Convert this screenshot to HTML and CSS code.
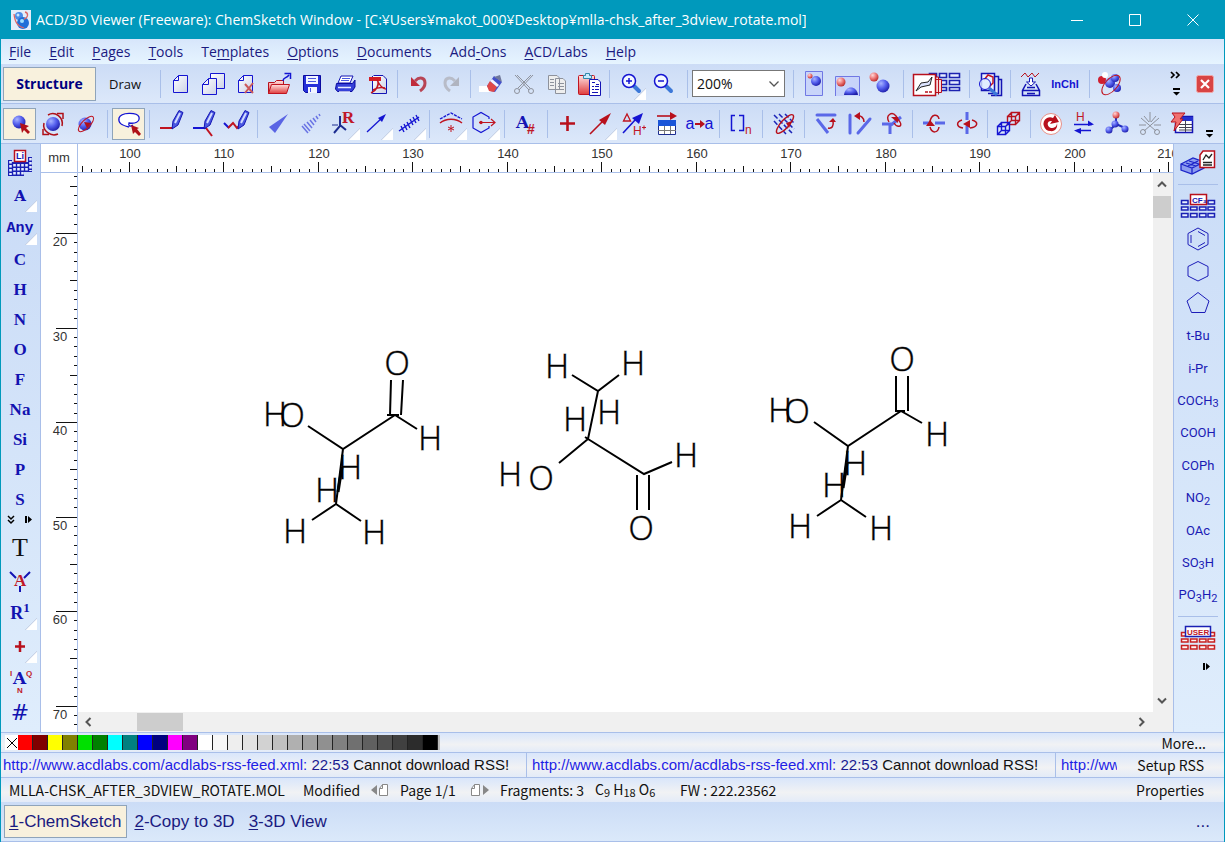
FILE: index.html
```html
<!DOCTYPE html>
<html lang="en">
<head>
<meta charset="utf-8">
<title>ACD/3D Viewer (Freeware): ChemSketch Window</title>
<link rel="stylesheet" href="styles.css">
</head>
<body>
<svg class="defs" aria-hidden="true">
  <defs>
    <radialGradient id="blue" cx="35%" cy="30%" r="75%"><stop offset="0" stop-color="#a8b4ff"/><stop offset=".5" stop-color="#5560ee"/><stop offset="1" stop-color="#1c1ca8"/></radialGradient>
    <radialGradient id="red" cx="35%" cy="30%" r="75%"><stop offset="0" stop-color="#ffd8d8"/><stop offset=".5" stop-color="#ee7a7a"/><stop offset="1" stop-color="#b82828"/></radialGradient>
    <linearGradient id="page" x2="1" y2="1"><stop offset="0" stop-color="#fff"/><stop offset="1" stop-color="#ccd2e6"/></linearGradient>
    <linearGradient id="folder" y2="1" x2="0"><stop offset="0" stop-color="#ffe0e0"/><stop offset="1" stop-color="#e03c3c"/></linearGradient>
    <pattern id="hticks" x="51" y="0" width="189" height="28" patternUnits="userSpaceOnUse">
      <path transform="translate(.5 0)" d="M0 18V28M94 18V28M47 22V28M142 22V28M9 25V28M19 25V28M28 25V28M38 25V28M57 25V28M66 25V28M76 25V28M85 25V28M104 25V28M113 25V28M123 25V28M132 25V28M151 25V28M161 25V28M170 25V28M180 25V28" stroke="#111"/>
    </pattern>
    <pattern id="vticks" x="0" y="60" width="36" height="189" patternUnits="userSpaceOnUse">
      <path transform="translate(0 .5)" d="M15 0H36M15 95H36M29 47H36M29 142H36M33 9H36M33 19H36M33 28H36M33 38H36M33 57H36M33 66H36M33 76H36M33 85H36M33 104H36M33 113H36M33 123H36M33 132H36M33 151H36M33 161H36M33 170H36M33 180H36" stroke="#111"/>
    </pattern>
    <symbol id="pencil" viewBox="0 0 14 20"><path d="M9 .5 13 2.500 8 15 2 19 3 11Z" fill="#4a58e0" stroke="#1414b4"/><path d="M10 3 5 13" stroke="#d4dcff" stroke-width="2"/></symbol>
  </defs>
</svg>

<header class="titlebar">
  <svg class="app-icon" viewBox="0 0 20 20"><rect width="20" height="20" fill="#e4edfa"/><circle cx="8" cy="6" r="4" fill="#4a8ce8"/><circle cx="12" cy="13" r="6" fill="#1f6fd8"/><circle cx="11" cy="11" r="2" fill="#9fe0ff"/><circle cx="7" cy="5" r="1.500" fill="#c8e8ff"/><path d="M3 4C4 12 6 16 13 18M14 2C18 3 17 8 13 9" fill="none" stroke="#d66" stroke-width="1.300"/></svg>
  <h1>ACD/3D Viewer (Freeware): ChemSketch Window - [C:¥Users¥makot_000¥Desktop¥mlla-chsk_after_3dview_rotate.mol]</h1>
  <div class="window-buttons">
    <button aria-label="Minimize"><svg viewBox="0 0 14 14"><path d="M1 7.500H13"/></svg></button>
    <button aria-label="Maximize"><svg viewBox="0 0 14 14"><path d="M1.500 1.500H12.500V12.500H1.500Z"/></svg></button>
    <button aria-label="Close"><svg viewBox="0 0 14 14"><path d="M1.500 1.500 12.500 12.500M12.500 1.500 1.500 12.500"/></svg></button>
  </div>
</header>

<nav class="menubar">
  <button><u>F</u>ile</button><button><u>E</u>dit</button><button><u>P</u>ages</button><button><u>T</u>ools</button><button>Te<u>m</u>plates</button><button><u>O</u>ptions</button><button><u>D</u>ocuments</button><button>Add<u>-</u>Ons</button><button><u>A</u>CD/Labs</button><button><u>H</u>elp</button>
</nav>

<div class="toolbar toolbar-main" role="toolbar" aria-label="General">
  <div class="modes"><button class="mode active">Structure</button><button class="mode">Draw</button></div>
  <div class="group">
    <button aria-label="New"><svg viewBox="0 0 32 32"><path d="M14.500 7.500H23.500V24.500H9.500V12.500ZM14.500 7.500V12.500H9.500" fill="url(#page)" stroke="#1414d2"/></svg></button>
    <button aria-label="New page"><svg viewBox="0 0 32 32"><path d="M13.500 5.500H27.500V20.500H13.500Z" fill="url(#page)" stroke="#1414d2"/><path d="M11.500 10.500H19.500V26.500H5.500V16.500ZM11.500 10.500V16.500H5.500" fill="url(#page)" stroke="#1414d2"/></svg></button>
    <button aria-label="Delete page"><svg viewBox="0 0 32 32"><path d="M13.500 7.500H22.500V24.500H8.500V12.500ZM13.500 7.500V12.500H8.500" fill="url(#page)" stroke="#1414d2"/><path d="M15 16 23 25M23 15 15 25" stroke="#cc5a5a" stroke-width="2"/></svg></button>
    <button aria-label="Open"><svg viewBox="0 0 32 32"><path d="M5.500 14.500H11.500L13.500 12.500H20.500V16.500H24.500L22.500 25.500H5.500Z" fill="url(#folder)" stroke="#b8101c"/><path d="M5.500 25.500 8.500 16.500H26.500L23.500 25.500Z" fill="url(#folder)" stroke="#c01420"/><path d="M20 13C20 9 23 11 26 7M21.500 5.500H27.500V11" fill="none" stroke="#1414d2" stroke-width="1.500"/></svg></button>
    <button aria-label="Save"><svg viewBox="0 0 32 32"><path d="M7.500 7.500H24.500V24.500H9.500L7.500 22.500Z" fill="#2530d8" stroke="#0a0aa0"/><path d="M10 8H22V16H10ZM12 19H21V25H12Z" fill="#f2f5ff"/><path d="M12 10.500H20M12 13.500H20M14.500 20V24" stroke="#4a58e0"/></svg></button>
    <button aria-label="Print"><svg viewBox="0 0 32 32"><path d="M12 8H24L21 15H9Z" fill="#fff" stroke="#1414b4"/><path d="M13 10.500H21M12 12.500H20" stroke="#4a58e0"/><path d="M7.500 15.500H23.500L26 12V19L23 23.500H8.500L6.500 21Z" fill="#3540d8" stroke="#0a0aa0"/><path d="M9 19.500H22M10 24H21" stroke="#e8ecff" stroke-width="1.500"/></svg></button>
    <button aria-label="Export to PDF"><svg viewBox="0 0 32 32"><path d="M11.500 7.500H21L24.500 11V25.500H10.500V8" fill="url(#page)" stroke="#1414b4"/><path d="M7 9H19V13H7Z" fill="#d41c24"/><path d="M15 12C19 20 22 21 24 21M16 13C17 19 13 23 9 25M11 22C16 19 20 19 23 20" fill="none" stroke="#c01420" stroke-width="1.500"/></svg></button>
  </div>
  <div class="group">
    <button aria-label="Undo"><svg viewBox="0 0 32 32"><path d="M13 13C18 8 23 10 23 15C23 19 21 21 18 23" fill="none" stroke="#b84454" stroke-width="3"/><path d="M9 9V18H18Z" fill="#c02c3c"/></svg></button>
    <button aria-label="Redo" disabled><svg viewBox="0 0 32 32"><path d="M20 13C15 8 10 10 10 15C10 19 12 21 15 23" fill="none" stroke="#b8bcc8" stroke-width="3"/><path d="M24 9V18H15Z" fill="#b0b4c0"/></svg></button>
  </div>
  <div class="group">
    <button aria-label="Clean"><svg viewBox="0 0 32 32"><path d="M4 18H18V24H4Z" fill="#fff"/><path d="M12 18 19 8 27 14 20 24 15 23Z" fill="#4450c8"/><path d="M12 18 15 13 22 19 19 24 14 23Z" fill="#e04848"/><path d="M15 13 17 11 24 17 22 19Z" fill="#f4f4ff"/><path d="M19 9 25 7 27 14Z" fill="#70789c"/></svg></button>
    <button aria-label="Cut" disabled><svg viewBox="0 0 32 32" fill="none" stroke="#8e929c"><path d="M7 7 21 22M25 7 11 22M9 7 22 20M23 7 10 20"/><circle cx="9" cy="23" r="2.500"/><circle cx="23" cy="23" r="2.500"/></svg></button>
    <button aria-label="Copy" disabled><svg viewBox="0 0 32 32"><path d="M7.500 7.500H16L18.500 10V21.500H7.500ZM14.500 10.500H22L24.500 13V25.500H14.500Z" fill="#eee" stroke="#8e929c"/><path d="M9 11.500H13M9 14.500H13M9 17.500H13M17 15.500H23M17 18.500H23M17 21.500H23" stroke="#8e929c"/></svg></button>
    <button aria-label="Paste"><svg viewBox="0 0 32 32"><rect x="4.500" y="7.500" width="16" height="19" rx="1" fill="url(#folder)" stroke="#c01420"/><path d="M9.500 10.500V7.500H11.500V5.500H15.500V7.500H17.500V10.500Z" fill="#c8ecff" stroke="#38a"/><path d="M15.500 11.500H24L26.500 14V27.500H15.500Z" fill="#fff" stroke="#1414b4"/><path d="M18 14.500H21M22 16.500H25M18 18.500H20M21 18.500H25M18 21.500H20M21 21.500H25M18 24.500H24" stroke="#1414b4"/></svg></button>
  </div>
  <div class="group start">
    <button class="more" aria-label="Zoom in"><svg viewBox="0 0 32 32" fill="none"><path d="M20 18 25 23" stroke="#3c78d8" stroke-width="4" stroke-linecap="round"/><circle cx="15" cy="13" r="6.500" fill="#f4f8ff" stroke="#1414d2" stroke-width="1.500"/><path d="M12 13H18M15 10V16" stroke="#1414d2" stroke-width="1.500"/></svg></button>
    <button aria-label="Zoom out"><svg viewBox="0 0 32 32" fill="none"><path d="M19 18 24 23" stroke="#3c78d8" stroke-width="4" stroke-linecap="round"/><circle cx="14" cy="13" r="6.500" fill="#f4f8ff" stroke="#1414d2" stroke-width="1.500"/><path d="M11 13H17" stroke="#1414d2" stroke-width="1.500"/></svg></button>
  </div>
  <div class="group start">
    <div class="zoom"><select aria-label="Zoom level"><option>200%</option></select><svg viewBox="0 0 10 6"><path d="M.5 .5 5 5 9.500 .5" fill="none" stroke="#555" stroke-width="1.300"/></svg></div>
  </div>
  <div class="group start">
    <button aria-label="Full page"><svg viewBox="0 0 32 32"><path d="M7.500 3.500H24.500V27.500H7.500Z" fill="#c8d4fa" stroke="#7078e4"/><circle cx="12" cy="8" r="2.500" fill="url(#red)"/><circle cx="18" cy="13" r="5" fill="url(#blue)"/></svg></button>
    <button aria-label="Page width"><svg viewBox="0 0 32 32"><path d="M4.500 28V8.500H28.500V28" fill="#c8d4fa" stroke="#7078e4"/><circle cx="10" cy="14" r="4.500" fill="url(#red)"/><path d="M13 27C14 17 26 17 27 27Z" fill="url(#blue)"/></svg></button>
    <button aria-label="Fit all"><svg viewBox="0 0 32 32"><circle cx="10" cy="9" r="4.500" fill="url(#red)"/><circle cx="19" cy="18" r="6.500" fill="url(#blue)"/></svg></button>
  </div>
  <div class="group">
    <button class="wide" aria-label="Template window"><svg viewBox="0 0 50 32"><path d="M17.500 5.500H24.500V9.500H17.500ZM27.500 5.500H34.500V9.500H27.500ZM37.500 5.500H47.500V9.500H37.500ZM27.500 12.500H34.500V16.500H27.500ZM37.500 12.500H47.500V16.500H37.500ZM27.500 19.500H34.500V22.500H27.500ZM37.500 19.500H47.500V22.500H37.500Z" fill="#e4ebff" stroke="#1c22b0" stroke-width="1.600"/><path d="M23 11.500H29.500V24.500H23M23 9H26.500V26.500" fill="#f4d8dc" stroke="#b8101c"/><path d="M1.500 6.500H23.500V27.500H1.500Z" fill="#fff" stroke="#b8101c" stroke-width="1.500"/><path d="M4 23 9 15 16 14 20 9 18 17 9 19Z" fill="#dce4ff" stroke="#222"/><path d="M13 24H21" stroke="#b8101c" stroke-width="1.500" stroke-dasharray="3 1"/></svg></button>
  </div>
  <div class="group">
    <button aria-label="Search"><svg viewBox="0 0 32 32"><path d="M7.500 5.500H20.500V22.500H7.500Z" fill="#eef2ff" stroke="#1414b4" stroke-width="1.500"/><path d="M21 8.500H24.500V25.500H14M25 11.500H27.500V27.500H17" fill="none" stroke="#1414b4" stroke-width="1.500"/><path d="M10 12 14 7 19 9 19 15 15 19" fill="none" stroke="#c01420" stroke-width="1.500"/><path d="M15 20 23 27" stroke="#3c78d8" stroke-width="3"/><circle cx="11" cy="16" r="5.500" fill="#dcecff" fill-opacity=".8" stroke="#1414d2"/></svg></button>
  </div>
  <div class="group start">
    <button aria-label="Generate name"><svg viewBox="0 0 32 32"><path d="M6 9 10 5 13 9 17 5 20 9 24 5" fill="none" stroke="#b8101c"/><path d="M14.500 10V14H11.500L16 18 20.500 14H17.500V10Z" fill="#fff" stroke="#1414b4"/><path d="M11 16 7.500 22.500V27.500H24.500V22.500L21 16M8 22.500H24M12 25.500H20M12 19.500H20" fill="none" stroke="#1414b4" stroke-width="1.500"/></svg></button>
    <button class="inchi">InChI</button>
  </div>
  <div class="group start last">
    <button aria-label="3D optimization"><svg viewBox="0 0 32 32"><circle cx="8" cy="12" r="4" fill="#d02030"/><circle cx="11" cy="7" r="3" fill="#fff"/><circle cx="16" cy="15" r="5" fill="url(#blue)"/><circle cx="21" cy="10" r="4" fill="url(#blue)"/><circle cx="23" cy="20" r="4" fill="url(#blue)"/><ellipse cx="17" cy="17" rx="6" ry="12" transform="rotate(42 17 17)" fill="none" stroke="#c01420"/></svg></button>
    <button class="overflow" aria-label="More buttons"><svg viewBox="0 0 14 32"><path d="M2 4 5 7 2 10M7 4 10 7 7 10" fill="none" stroke="#000" stroke-width="1.700"/><path d="M4 20H11V22H4ZM4 24H11L7.500 27.500Z"/></svg></button>
    <button class="close-doc" aria-label="Close document"><svg viewBox="0 0 18 18"><rect x=".5" y=".5" width="17" height="17" rx="2" fill="#d84444" stroke="#f0a8a8"/><path d="M5 5 13 13M13 5 5 13" stroke="#fff" stroke-width="2.200"/></svg></button>
  </div>
</div>

<div class="toolbar toolbar-structure" role="toolbar" aria-label="Structure">
  <div class="group start first">
    <button class="active" aria-label="Select and move"><svg viewBox="0 0 32 32"><circle cx="15" cy="14" r="6.500" fill="url(#blue)"/><path d="M16 15 25 18 22 20 26 24 24 26 20 22 18 25Z" fill="#b01018"/></svg></button>
    <button aria-label="Select and rotate"><svg viewBox="0 0 32 32"><circle cx="16" cy="16" r="7" fill="url(#blue)"/><path d="M11 7C18 3 27 9 25 18M21 26C14 29 5 23 7 15" fill="none" stroke="#b01018" stroke-width="1.500"/><path d="M20 5.500H26V11M12 26.500H6V21" fill="none" stroke="#b01018" stroke-width="1.500"/></svg></button>
    <button aria-label="3D rotation"><svg viewBox="0 0 32 32"><circle cx="15" cy="16" r="6.500" fill="url(#blue)"/><ellipse cx="16" cy="16" rx="10" ry="4" transform="rotate(-45 16 16)" fill="none" stroke="#c01420"/><path d="M14 14 21 15 17 20Z" fill="#b01018"/></svg></button>
  </div>
  <div class="group">
    <button class="active" aria-label="Lasso"><svg viewBox="0 0 32 32"><path d="M16 19C8 17 5 15 6 10C8 4 24 4 26 9C27 14 22 16 16 15C15 18 17 19 20 17" fill="#fff" stroke="#1414d2" stroke-width="1.300"/><path d="M18 17 26 20 24 21 28 26 26 28 22 24 20 26Z" fill="#b01018"/></svg></button>
  </div>
  <div class="group">
    <button aria-label="Draw normal"><svg viewBox="0 0 32 32"><path d="M5 20H18" stroke="#c01420" stroke-width="2"/><use href="#pencil" x="15" y="2" width="14" height="20"/></svg></button>
    <button aria-label="Draw continuous"><svg viewBox="0 0 32 32"><path d="M5 20H18" stroke="#1414d2" stroke-width="2"/><path d="M18 20 24 28" stroke="#c01420" stroke-width="2"/><use href="#pencil" x="14" y="2" width="14" height="20"/></svg></button>
    <button aria-label="Draw chains"><svg viewBox="0 0 32 32"><path d="M3 15 8 20" stroke="#1414d2" stroke-width="2"/><path d="M7 20 12 15 16 20 19 17" fill="none" stroke="#c01420" stroke-width="2"/><use href="#pencil" x="15" y="2" width="14" height="20"/></svg></button>
  </div>
  <div class="group">
    <button aria-label="Up stereo bond"><svg viewBox="0 0 32 32"><path d="M26 6 7 19 13 25Z" fill="#5a64e4"/></svg></button>
    <button aria-label="Down stereo bond"><svg viewBox="0 0 32 32"><path d="M7 18 13 25M9 16 15 23M12 14 17 20M15 12 19 17M18 10 21 14M21 8 23 11M24 6 25 8" stroke="#6a74e4" stroke-width="1.500"/></svg></button>
    <button class="more" aria-label="R group"><svg viewBox="0 0 32 32"><path d="M12 8V18L6 25M12 17 18 22" fill="none" stroke="#1c2c90" stroke-width="2"/><path d="M4 17H10" stroke="#1c2c90"/><text x="14" y="15" class="glyph-serif thin red">R</text></svg></button>
    <button class="more" aria-label="Coordinating bond"><svg viewBox="0 0 32 32"><path d="M6 24 22 9" stroke="#1414d2" stroke-width="1.300"/><path d="M25 6 17 10 21 14Z" fill="#1414d2"/></svg></button>
    <button class="more" aria-label="Undefined bond"><svg viewBox="0 0 32 32"><path d="M5 23 25 9M7 18 10 24M10 16 13 22M13 14 16 20M16 11 19 17M19 9 22 15M22 7 25 13" fill="none" stroke="#1414d2" stroke-width="1.400"/></svg></button>
  </div>
  <div class="group">
    <button class="more" aria-label="Delocalized bond"><svg viewBox="0 0 32 32"><path d="M5 11 16 5 27 11" fill="none" stroke="#1414d2" stroke-width="1.300" stroke-dasharray="3 1"/><path d="M5 15C11 10 21 10 27 15" fill="none" stroke="#c01420" stroke-width="1.500"/><path d="M16 17V24M13 19 19 22M19 19 13 22" stroke="#c01420"/></svg></button>
    <button class="more" aria-label="Markush bond"><svg viewBox="0 0 32 32"><path d="M21 11V9L13 4.500 5 9V20L13 24.500 21 20V18" fill="none" stroke="#1414d2" stroke-width="1.200"/><path d="M11 14.500H27M23 11 27 14.500 23 18" fill="none" stroke="#c01420" stroke-width="1.200"/><circle cx="13" cy="14.500" r="1.700" fill="#c01420"/></svg></button>
  </div>
  <div class="group">
    <button aria-label="Edit atom label"><svg viewBox="0 0 32 32"><text x="6" y="20" class="glyph-serif">A</text><text x="17" y="26" class="glyph red">#</text></svg></button>
  </div>
  <div class="group">
    <button aria-label="Plus"><svg viewBox="0 0 32 32"><path d="M8 15.500H23M15.500 8V23" stroke="#b8101c" stroke-width="2.600"/></svg></button>
    <button class="more" aria-label="Reaction arrow"><svg viewBox="0 0 32 32"><path d="M5 26 20 11" stroke="#b8101c" stroke-width="1.600"/><path d="M26 5 14 12 20 17Z" fill="#b8101c"/></svg></button>
    <button aria-label="Reaction conditions"><svg viewBox="0 0 32 32"><path d="M5 25 18 11" stroke="#1414d2" stroke-width="1.600"/><path d="M25 5 14 10 21 16Z" fill="#1414d2"/><path d="M5.500 13 9 6 12.500 13Z" fill="none" stroke="#c01420" stroke-width="1.300"/><text x="15" y="27" class="glyph small red">H</text><path d="M24 19.500H28M26 17.500V21.500" stroke="#c01420"/></svg></button>
    <button aria-label="Calculate"><svg viewBox="0 0 32 32"><path d="M6 8H22" stroke="#b8101c" stroke-width="1.600"/><path d="M19 4 26 8 19 12Z" fill="#b8101c"/><path d="M7.500 12.500H24.500V26.500H7.500Z" fill="#fff" stroke="#1c2c90"/><path d="M7 12H25V18H7Z" fill="#1a55d8"/><path d="M7 22.500H25M13.500 18V26M19.500 18V26" stroke="#777"/></svg></button>
    <button aria-label="Atom to atom map" class="map-label">a<svg viewBox="0 0 10 10"><path d="M0 5H6" stroke="#b8101c" stroke-width="2"/><path d="M5 1 10 5 5 9Z" fill="#b8101c"/></svg>a</button>
  </div>
  <div class="group">
    <button aria-label="Polymer"><svg viewBox="0 0 32 32"><path d="M10 7.500H6.500V22.500H10M14 7.500H18.500V22.500H14" fill="none" stroke="#1414d2" stroke-width="1.500"/><text x="20" y="26" class="glyph small red">n</text></svg></button>
  </div>
  <div class="group">
    <button aria-label="Clean structure"><svg viewBox="0 0 32 32"><path d="M6 7 24 25M6 13 18 26M11 6 26 21M17 6 26 15" stroke="#1c24b8" stroke-width="1.500" stroke-dasharray="5 2"/><ellipse cx="17" cy="16" rx="12" ry="4" transform="rotate(-48 17 16)" fill="none" stroke="#b8101c" stroke-width="1.400"/><path d="M18 15 24 13 21 20Z" fill="#b8101c"/></svg></button>
  </div>
  <div class="group">
    <button aria-label="Set bond horizontally"><svg viewBox="0 0 32 32"><path d="M7 7H25" stroke="#5a68e8" stroke-width="3" stroke-linecap="round"/><path d="M7 11 18 25" stroke="#5a68e8" stroke-width="3"/><path d="M23 13C24 18 22 21 18 20" fill="none" stroke="#b8101c" stroke-width="1.500"/><path d="M19 14H26L23 10Z" fill="#b8101c"/></svg></button>
    <button aria-label="Set bond vertically"><svg viewBox="0 0 32 32"><path d="M7 7V25M27 11 15 25" stroke="#5a68e8" stroke-width="3" stroke-linecap="round"/><path d="M14 8C18 7 21 10 21 14" fill="none" stroke="#b8101c" stroke-width="1.500"/><path d="M11 8 17 4V12Z" fill="#b8101c"/></svg></button>
    <button aria-label="Flip on bond"><svg viewBox="0 0 32 32"><path d="M6 16H17M14 26V15M15 17 25 9" stroke="#5a68e8" stroke-width="3"/><path d="M13 14C9 7 16 3 20 8L24 14C27 19 21 20 18 15" fill="none" stroke="#b8101c" stroke-width="1.400"/><path d="M15 9H22V15Z" fill="#b8101c"/></svg></button>
  </div>
  <div class="group">
    <button aria-label="Flip top to bottom"><svg viewBox="0 0 32 32"><path d="M5 15H12M17 15H27" stroke="#5a68e8" stroke-width="3"/><path d="M21 11C20 5 13 6 12 14M12 19C14 26 20 25 21 19" fill="none" stroke="#b8101c" stroke-width="1.500"/><path d="M8 18 12 12 17 18Z" fill="#b8101c"/></svg></button>
    <button aria-label="Flip left to right"><svg viewBox="0 0 32 32"><path d="M16 4V12M16 18V26" stroke="#5a68e8" stroke-width="3"/><path d="M11 12C5 14 5 19 12 20M21 12C28 14 27 19 19 20" fill="none" stroke="#b8101c" stroke-width="1.500"/><path d="M12 16 19 12V20Z" fill="#b8101c"/></svg></button>
  </div>
  <div class="group">
    <button aria-label="Bring to plane"><svg viewBox="0 0 32 32" fill="none" stroke-width="1.400"><path d="M14.500 8.500H22.500V16.500H14.500ZM18.500 4.500H26.500V12.500H18.500ZM14.500 8.500 18.500 4.500M22.500 8.500 26.500 4.500M22.500 16.500 26.500 12.500M14.500 16.500 18.500 12.500" stroke="#b8101c"/><path d="M4.500 18.500H12.500V26.500H4.500ZM8.500 14.500H16.500V22.500H8.500ZM4.500 18.500 8.500 14.500M12.500 18.500 16.500 14.500M12.500 26.500 16.500 22.500M4.500 26.500 8.500 22.500" stroke="#1414d2"/></svg></button>
  </div>
  <div class="group start last">
    <button aria-label="Refresh"><svg viewBox="0 0 32 32"><circle cx="16" cy="16" r="10.500" fill="#fff" stroke="#e89088"/><path d="M16 23A7 7 0 0 1 12 10C14 9 16 9 18 10L20 7 24 14 15 16 17 13C12 12 11 18 16 20Z" fill="#b8101c"/><path d="M16 20C20 20 22 18 22 15C23 20 20 24 15 23Z" fill="#b8101c"/></svg></button>
    <button aria-label="Tautomers"><svg viewBox="0 0 32 32"><text x="8" y="13" class="glyph small red">H</text><path d="M6 16.500H24M9 22.500H23" stroke="#1414d2" stroke-width="1.500"/><path d="M20 12.500 26 16.500 20 18ZM13 20 6 22.500 13 26Z" fill="#1414d2"/></svg></button>
    <button aria-label="3D structure"><svg viewBox="0 0 32 32"><path d="M15 8V16L9 22M15 16 24 20" fill="none" stroke="#2430c0" stroke-width="2"/><circle cx="15" cy="7" r="3.500" fill="url(#red)"/><circle cx="14" cy="16" r="3.500" fill="url(#blue)"/><circle cx="8" cy="22" r="3.500" fill="url(#blue)"/><circle cx="24" cy="21" r="3.500" fill="url(#blue)"/></svg></button>
    <button aria-label="Add hydrogens" disabled><svg viewBox="0 0 32 32" fill="none" stroke="#8e929c"><path d="M16 4V14M7 10 22 23M25 10 10 23M5 17H12M20 17H27M10 8 15 14M22 8 17 14"/><circle cx="9" cy="24" r="2.500"/><circle cx="23" cy="24" r="2.500"/></svg></button>
    <button aria-label="Properties table"><svg viewBox="0 0 32 32"><path d="M12.500 8.500H25.500V24.500H8.500V15" fill="#fff" stroke="#1414b4" stroke-width="1.500"/><path d="M13 9H26V13H13Z" fill="#2430d0"/><path d="M18.500 12V24M12 16.500H25M12 19.500H25M12 22H25" stroke="#445"/><path d="M5 5H18L13 11H16L7 23 9 14H4L8 9Z" fill="#f07070" stroke="#b8101c"/></svg></button>
    <button class="overflow" aria-label="More buttons"><svg viewBox="0 0 14 32"><path d="M4 22H11V24H4ZM4 26H11L7.500 29.500Z"/></svg></button>
  </div>
</div>

<main class="workspace">
  <aside class="atoms" aria-label="Atoms">
    <button aria-label="Periodic table"><svg viewBox="0 0 32 32"><path d="M4 13H8V15H24V10H28V25H20V29H4Z" fill="#1a20b4"/><path d="M6.500 14V28M10.500 17V28M14.500 17V28M18.500 17V28M22.500 17V24M26.500 11V24" stroke="#e4edff" stroke-width="2.600" stroke-dasharray="2.600 1.400"/><rect x="10.500" y="3.500" width="11" height="11" fill="#fff" stroke="#b8101c" stroke-width="1.500"/><text x="12" y="12" class="glyph tiny">Li</text></svg></button>
    <button class="more mono">A</button>
    <button class="more mono any">Any</button>
    <button class="atom">C</button><button class="atom">H</button><button class="atom">N</button><button class="atom">O</button><button class="atom">F</button><button class="atom">Na</button><button class="atom">Si</button><button class="atom">P</button><button class="atom">S</button>
    <div class="scrollers"><button aria-label="More atoms"><svg viewBox="0 0 10 10"><path d="M1 1 4 4 7 1M1 5 4 8 7 5" fill="none" stroke="#000" stroke-width="1.500"/></svg></button><button aria-label="Expand"><svg viewBox="0 0 10 10"><path d="M1 1H3V8H1ZM4 1 8 4.500 4 8Z"/></svg></button></div>
    <button class="text-tool">T</button>
    <button aria-label="Hide atom label"><svg viewBox="0 0 32 32"><path d="M6 7 12 13M26 7 20 13M16 21V27" stroke="#1414b4" stroke-width="2"/><text x="10" y="21" class="glyph-serif red thin">A</text></svg></button>
    <button class="more atom">R<sup>1</sup></button>
    <button class="more" aria-label="Charge"><svg viewBox="0 0 32 32"><path d="M11 15.500H21M16 10V21" stroke="#b8101c" stroke-width="2.500"/></svg></button>
    <button aria-label="Atom properties"><svg viewBox="0 0 32 32"><text x="9" y="20" class="glyph-serif">A</text><text x="6" y="12" class="glyph micro red">I</text><text x="22" y="12" class="glyph micro red">Q</text><text x="13" y="29" class="glyph micro red">N</text></svg></button>
    <button class="hash">#</button>
  </aside>

  <section class="editor">
    <div class="ruler-top">
      <span class="unit">mm</span>
      <svg class="ruler-h"><rect width="100%" height="28" fill="url(#hticks)"/>
        <text x="52" y="14">100</text><text x="146" y="14">110</text><text x="241" y="14">120</text><text x="335" y="14">130</text><text x="430" y="14">140</text><text x="524" y="14">150</text><text x="619" y="14">160</text><text x="713" y="14">170</text><text x="808" y="14">180</text><text x="902" y="14">190</text><text x="997" y="14">200</text><text x="1090" y="14">210</text></svg>
    </div>
    <div class="editor-body">
      <svg class="ruler-v"><rect width="36" height="100%" fill="url(#vticks)"/>
        <text x="19" y="73">20</text><text x="19" y="168">30</text><text x="19" y="262">40</text><text x="19" y="357">50</text><text x="19" y="451">60</text><text x="19" y="546">70</text></svg>
      <div class="canvas-area">
        <div class="canvas-row">
          <svg class="canvas" aria-label="Lactaldehyde, three orientations">
            <g transform="translate(-78 -173)">
              <path d="M391 380 390 415M403 380 401 415M387 415H399M395 415 343 449 308 426M395 415 417 429M343 449 336 504 312 520M336 504 361 521"/>
              <path class="heavy" d="M342 467 338 492"/>
              <text x="397" y="375">O</text><text x="430" y="450">H</text><text x="275" y="426">H</text><text x="292" y="427">O</text><text x="350" y="479">H</text><text x="327" y="502">H</text><text x="295" y="543">H</text><text x="374" y="544">H</text>
              <path d="M572 375 598 391 619 375M598 391 588 439 559 463M585 437 588 439 644 474 672 462M637 475V510M649 475V510"/>
              <text x="557" y="378">H</text><text x="633" y="375">H</text><text x="575" y="431">H</text><text x="609" y="424">H</text><text x="510" y="486">H</text><text x="541" y="490">O</text><text x="686" y="467">H</text><text x="641" y="540">O</text>
              <path d="M896 376V411M908 376V411M895 411H905M901 411 848 446 814 422M901 411 922 423M848 446 841 500 817 516M841 500 866 517"/>
              <path class="heavy" d="M847 463 843 488"/>
              <text x="902" y="371">O</text><text x="937" y="446">H</text><text x="780" y="422">H</text><text x="797" y="423">O</text><text x="855" y="475">H</text><text x="834" y="497">H</text><text x="800" y="538">H</text><text x="881" y="540">H</text>
            </g>
          </svg>
          <div class="scroll-v"><svg viewBox="0 0 10 8"><path d="M1 6.500 5 2.500 9 6.500"/></svg><span class="thumb"></span><svg viewBox="0 0 10 8"><path d="M1 1.500 5 5.500 9 1.500"/></svg></div>
        </div>
        <div class="scroll-h"><svg viewBox="0 0 8 10"><path d="M6.500 1 2.500 5 6.500 9"/></svg><span class="thumb"></span><svg viewBox="0 0 8 10"><path d="M1.500 1 5.500 5 1.500 9"/></svg></div>
      </div>
    </div>
  </section>

  <aside class="radicals" aria-label="Radicals">
    <button aria-label="Dictionary"><svg viewBox="0 0 36 32"><path d="M1 17 13 11 24 15V21L12 27 1 23Z" fill="#8c9cf0" stroke="#1c24c8" stroke-width="1.300"/><path d="M1 17 12 21 24 15M12 21V27M6 16 16 19M9 14 19 17M8 19 18 14" fill="none" stroke="#1c24c8" stroke-width="1.300"/><path d="M23 4H34.500V20.500H20V8Z" fill="#fff" stroke="#b8101c" stroke-width="1.500"/><path d="M23 13 26 8 29 11 32 7M23 15.500H32M23 18H32" fill="none" stroke="#222" stroke-width="1.300"/></svg></button>
    <div class="radical-list">
      <button aria-label="Table of radicals"><svg viewBox="0 0 36 32"><path d="M1.500 10.500H8V14H1.500ZM28 10.500H34.500V14H28ZM1.500 17H8V20H1.500ZM10.500 17H17V20H10.500ZM19.500 17H26V20H19.500ZM28 17H34.500V20H28ZM1.500 23.500H8V27H1.500ZM10.500 23.500H17V27H10.500ZM19.500 23.500H26V27H19.500ZM28 23.500H34.500V27H28Z" fill="#e8f0ff" stroke="#1a20b4" stroke-width="1.500"/><path d="M10.500 4.500H26.500V14.500H10.500Z" fill="#fff" stroke="#b8101c" stroke-width="1.500"/><text x="12" y="13" class="glyph micro">CF₃</text></svg></button>
      <button aria-label="Benzene"><svg viewBox="0 0 32 32" class="ring"><path d="M16 5 26 10.500V21.500L16 27 6 21.500V10.500ZM9 12V20M16 8.500 23 12.500M16 23.500 23 19.500"/></svg></button>
      <button aria-label="Cyclohexane"><svg viewBox="0 0 32 32" class="ring"><path d="M16 6.500 26 11.500V21L16 26 6 21V11.500Z"/></svg></button>
      <button aria-label="Cyclopentane"><svg viewBox="0 0 32 32" class="ring"><path d="M16 5.500 27 14 23 25.500H9.500L5 14Z"/></svg></button>
      <button>t-Bu</button><button>i-Pr</button><button>COCH<sub>3</sub></button><button>COOH</button><button>COPh</button><button>NO<sub>2</sub></button><button>OAc</button><button>SO<sub>3</sub>H</button><button>PO<sub>3</sub>H<sub>2</sub></button>
    </div>
    <button aria-label="User radicals"><svg viewBox="0 0 36 32"><path d="M1.500 10.500H8V14H1.500ZM28 10.500H34.500V14H28ZM1.500 17H8V20H1.500ZM10.500 17H17V20H10.500ZM19.500 17H26V20H19.500ZM28 17H34.500V20H28ZM1.500 23.500H8V27H1.500ZM10.500 23.500H17V27H10.500ZM19.500 23.500H26V27H19.500ZM28 23.500H34.500V27H28Z" fill="#fff4f4" stroke="#c82020" stroke-width="1.500"/><path d="M5.500 4.500H30.500V14.500H5.500Z" fill="#fff" stroke="#1a20b4" stroke-width="1.500"/><text x="7" y="13" class="glyph micro red">USER</text></svg></button>
    <button class="expand" aria-label="Expand"><svg viewBox="0 0 10 10"><path d="M1 1H3V8H1ZM4 1 8 4.500 4 8Z"/></svg></button>
  </aside>
</main>

<div class="palette">
  <button class="no-color" aria-label="No colour"><svg viewBox="0 0 12 12"><path d="M1 1 11 11M11 1 1 11" stroke="#000"/></svg></button>
  <div class="swatches">
    <span class="c-red"></span><span class="c-maroon"></span><span class="c-yellow"></span><span class="c-olive"></span><span class="c-lime"></span><span class="c-green"></span><span class="c-cyan"></span><span class="c-teal"></span><span class="c-blue"></span><span class="c-navy"></span><span class="c-magenta"></span><span class="c-purple"></span>
    <span class="g-0"></span><span class="g-1"></span><span class="g-2"></span><span class="g-3"></span><span class="g-4"></span><span class="g-5"></span><span class="g-6"></span><span class="g-7"></span><span class="g-8"></span><span class="g-9"></span><span class="g-10"></span><span class="g-11"></span><span class="g-12"></span><span class="g-13"></span><span class="g-14"></span><span class="g-15"></span>
  </div>
  <button class="side-action">More...</button>
</div>

<div class="rss">
  <div class="feed">
    <span class="item"><a href="#">http://www.acdlabs.com/acdlabs-rss-feed.xml:</a> <time>22:53</time> Cannot download RSS!</span>
    <span class="item"><a href="#">http://www.acdlabs.com/acdlabs-rss-feed.xml:</a> <time>22:53</time> Cannot download RSS!</span>
    <span class="item"><a href="#">http://www.acdlabs.com/</a></span>
  </div>
  <button class="side-action">Setup RSS</button>
</div>

<div class="status">
  <span>MLLA-CHSK_AFTER_3DVIEW_ROTATE.MOL</span>
  <span>Modified</span>
  <button aria-label="Previous page"><svg viewBox="0 0 18 14"><path d="M6 2V12L0 7Z" fill="#888"/><path d="M11.500 1.500H16.500V12.500H8.500V5.500ZM11.500 1.500V5.500H8.500" fill="#fff" stroke="#888"/></svg></button>
  <span>Page 1/1</span>
  <button aria-label="Next page"><svg viewBox="0 0 18 14"><path d="M12 2V12L18 7Z" fill="#888"/><path d="M3.500 1.500H8.500V12.500H.5V5.500ZM3.500 1.500V5.500H.5" fill="#fff" stroke="#888"/></svg></button>
  <span>Fragments: 3</span>
  <span class="formula">C<small>9</small> H<small>18</small> O<small>6</small></span>
  <span>FW : 222.23562</span>
  <button class="side-action">Properties</button>
</div>

<nav class="tabs">
  <button class="active"><u>1</u>-ChemSketch</button><button><u>2</u>-Copy to 3D</button><button><u>3</u>-3D View</button><button class="tabs-more" aria-label="More">...</button>
</nav>
</body>
</html>
```

FILE: styles.css
```css
* { box-sizing: border-box; }

:root {
  --teal: #0099bc;
  --line: #a9bfe9;
  --ink: #1a1a80;
  --bar: linear-gradient(#ccdcf6, #dce8fa);
  --ui: "Open Sans", "Noto Sans", sans-serif;
  --small-ui: "Noto Sans CJK JP", "Noto Sans", sans-serif;
}

body {
  margin: 0;
  height: 100vh;
  display: flex;
  flex-direction: column;
  overflow: hidden;
  border-left: 1px solid var(--teal);
  border-right: 1px solid var(--teal);
  background: #dce8fa;
  font-family: var(--ui);
  color: #111;
}

.defs { position: absolute; width: 0; height: 0; }
svg { display: block; flex: none; }
button { margin: 0; padding: 0; border: 0; background: none; font: inherit; color: inherit; white-space: nowrap; }

/* Title bar */
.titlebar { height: 39px; flex: none; display: flex; align-items: center; padding: 0 2px 0 10px; background: var(--teal); color: #fff; }
.app-icon { width: 20px; height: 20px; }
.titlebar h1 { margin: 0 auto 0 5px; font-size: 14px; font-weight: 400; white-space: nowrap; overflow: hidden; }
.window-buttons { display: flex; }
.window-buttons button { width: 58px; height: 38px; display: grid; place-items: center; }
.window-buttons svg { width: 14px; height: 14px; fill: none; stroke: #fff; }

/* Menu bar */
.menubar { height: 25px; flex: none; display: flex; align-items: center; gap: 18px; padding: 0 8px; background: linear-gradient(#d7e6fb, #e6f4ff); font-size: 14px; color: var(--ink); }
.menubar u, .tabs u { text-underline-offset: 2px; }

/* Toolbars */
.toolbar { height: 40px; flex: none; display: grid; align-items: center; border-bottom: 1px solid var(--line); background: var(--bar); }
.toolbar-main { grid-template-columns: 159px 237px 73px 139px 78px 106px 110px 66px 41px 79px 1fr; }
.toolbar-structure { grid-template-columns: 106px 42px 108px 172px 75px 43px 172px 43px 42px 108px 75px 43px 1fr; }
.group { height: 28px; display: flex; align-items: center; justify-content: center; border-left: 1px solid var(--line); }
.group.start { justify-content: flex-start; padding-left: 3px; }
.group.first { border-left: 0; padding-left: 2px; }
.group > button { width: 33px; height: 32px; display: grid; place-items: center; position: relative; flex: none; }
.group > button > svg { width: 32px; height: 32px; }
.group > .wide { width: 52px; }
.group > .wide > svg { width: 50px; }
.group > .active { background: #f8f1dd; outline: 1px solid #8fa4ba; outline-offset: -1px; }
.more::after { content: ""; position: absolute; right: 0; bottom: 0; width: 12px; height: 12px; background: linear-gradient(135deg, transparent 48%, #b5c4df 48%, #fff 56%); }
.modes { display: flex; align-items: center; gap: 13px; padding-left: 2px; }
.mode { height: 34px; font-size: 13px; }
.mode.active { width: 93px; font-size: 14px; font-weight: 700; color: #000080; background: #f8f1dd; border: 1px solid #8fa4ba; }
.zoom { display: grid; align-items: center; width: 93px; margin-left: 1px; }
.zoom select, .zoom svg { grid-area: 1 / 1; }
.zoom select { appearance: none; width: 100%; height: 27px; padding: 0 4px; border: 1px solid #777; border-radius: 0; background: #fff; color: #111; font: 14px var(--ui); }
.zoom svg { width: 10px; height: 6px; justify-self: end; margin-right: 6px; pointer-events: none; }
.group > .inchi { width: 36px; font: 700 11px "Liberation Sans", sans-serif; color: #1414d2; }
.group > .overflow { width: 14px; margin-left: auto; }
.group > .overflow > svg { width: 14px; }
.group > .close-doc { width: 18px; margin: 0 10px 0 13px; }
.group > .close-doc > svg { width: 18px; height: 18px; }
.toolbar-structure .last { padding-right: 8px; }
.group > .map-label { display: flex; justify-content: center; font: 16px "Liberation Sans", sans-serif; color: #1414d2; }
.group > .map-label > svg { width: 10px; height: 10px; }

.glyph-serif { font: 700 17px "DejaVu Serif", serif; fill: #1414b4; }
.glyph { font: 700 14px "Liberation Sans", sans-serif; fill: #1414b4; }
.glyph.small { font-size: 12px; font-weight: 400; }
.glyph.tiny { font-size: 9px; }
.glyph.micro { font-size: 8px; }
.glyph-serif.thin { font: 700 17px "Liberation Serif", serif; }
.glyph.red, .glyph-serif.red { fill: #c01828; }

/* Work area */
.workspace { flex: 1; min-height: 0; display: flex; background: #fff; }
.atoms { width: 40px; flex: none; display: flex; flex-direction: column; padding: 2px 3px 0 2px; border-right: 1px solid var(--line); background: linear-gradient(#c8daf6, #dfedfc); color: #1212b0; overflow: hidden; }
.atoms > button { height: 33px; flex: none; display: flex; align-items: center; justify-content: center; position: relative; }
.atoms svg { width: 32px; height: 32px; }
.atoms .atom { font: 700 17px "Liberation Serif", serif; }
.atoms .atom:not(.more) { height: 30px; }
.atoms .atom.more { font-size: 18px; }
.atoms sup { font-size: 13px; align-self: flex-start; margin-top: 3px; }
.atoms .mono { font: 700 15px "DejaVu Serif", serif; }
.atoms .any { font: 700 15px "Liberation Mono", monospace; }
.atoms .text-tool { font: 26px "Liberation Serif", serif; color: #111; }
.atoms .hash { font: 22px "DejaVu Sans", sans-serif; }
.scrollers { height: 16px; flex: none; display: flex; justify-content: center; align-items: flex-start; gap: 7px; }
.scrollers button, .scrollers svg { width: 10px; height: 10px; }

.editor { flex: 1; min-width: 0; display: flex; flex-direction: column; }
.ruler-top { height: 29px; flex: none; display: flex; border-bottom: 1px solid var(--line); }
.unit { width: 37px; flex: none; border-right: 1px solid var(--line); font: 13px/28px "Liberation Sans", sans-serif; text-align: center; color: #333; }
.ruler-h { flex: 1; min-width: 0; height: 28px; }
.ruler-h text, .ruler-v text { font: 13px "Liberation Sans", sans-serif; fill: #333; text-anchor: middle; }
.editor-body { flex: 1; min-height: 0; display: flex; }
.ruler-v { width: 37px; height: 100%; border-right: 1px solid var(--line); }
.canvas-area { flex: 1; min-width: 0; display: flex; flex-direction: column; }
.canvas-row { flex: 1; min-height: 0; display: flex; }
.canvas { flex: 1; min-width: 0; height: 100%; }
.canvas path { fill: none; stroke: #000; stroke-width: 2; }
.canvas .heavy { stroke-width: 3; }
.canvas text { font: 300 33px "Open Sans", "Noto Sans", sans-serif; text-anchor: middle; stroke: #000; stroke-width: 1; stroke-opacity: .5; }
.scroll-v { width: 20px; flex: none; display: flex; flex-direction: column; align-items: center; padding: 7px 2px 7px 0; background: #f0f0f0; }
.scroll-v svg { width: 10px; height: 8px; }
.scroll-v .thumb { width: 18px; height: 22px; margin: 8px 0 auto; background: #cdcdcd; }
.scroll-h { height: 20px; flex: none; display: flex; align-items: center; padding: 0 27px 0 6px; background: #f0f0f0; }
.scroll-h svg { width: 8px; height: 10px; }
.scroll-h .thumb { width: 46px; height: 18px; margin: 0 auto 0 45px; background: #cdcdcd; }
.scroll-v path, .scroll-h path { fill: none; stroke: #555; stroke-width: 2; }

.radicals { width: 51px; flex: none; display: flex; flex-direction: column; align-items: center; padding: 3px 2px 0 0; border-left: 1px solid var(--line); background: linear-gradient(#cadcf7, #dfedfc); color: #1a1ab4; font: 13px Roboto, "Liberation Sans", sans-serif; overflow: hidden; }
.radicals > button { height: 32px; flex: none; }
.radicals svg { width: 36px; height: 32px; }
.radical-list { height: 433px; flex: none; width: 40px; display: grid; grid-template-columns: minmax(0, 1fr); grid-auto-rows: 1fr; justify-items: center; margin: 5px 0; padding: 5px 0; border-top: 1px solid var(--line); border-bottom: 1px solid var(--line); }
.radical-list button { display: flex; align-items: center; justify-content: center; }
.radical-list sub { font-size: 11px; align-self: center; margin-top: 7px; }
.radicals .ring { width: 32px; fill: none; stroke: #1c1cb8; stroke-width: 1; }
.radicals > .expand { height: 20px; margin: 3px 10px 0 auto; }
.radicals .expand svg { width: 10px; height: 10px; }

/* Bottom bars */
.palette, .rss, .status { flex: none; align-items: center; border-top: 1px solid var(--line); background: linear-gradient(#d9e6fb, #f1f2f4 60%, #e3ebf8); }
.palette, .rss { display: flex; }
.side-action { margin-left: auto; font: 14px/18px var(--small-ui); }
.palette { height: 20px; padding: 0 18px 0 4px; }
.no-color { width: 13px; height: 15px; display: grid; place-items: center; background: #fff; }
.no-color svg { width: 12px; height: 12px; }
.swatches { display: flex; height: 15px; border-right: 2px solid #bbb; }
.swatches span { width: 15px; border-right: 1px solid #222; }
.c-red { background: #f00; } .c-maroon { background: #800000; } .c-yellow { background: #ff0; } .c-olive { background: #808000; }
.c-lime { background: #00e000; } .c-green { background: #008000; } .c-cyan { background: #0ff; } .c-teal { background: #008080; }
.c-blue { background: #00f; } .c-navy { background: #000080; } .c-magenta { background: #f0f; } .c-purple { background: #800080; }
.g-0 { background: #fff; } .g-1 { background: #f7f7f7; } .g-2 { background: #eee; } .g-3 { background: #e2e2e2; }
.g-4 { background: #d2d2d2; } .g-5 { background: #c0c0c0; } .g-6 { background: #b0b0b0; } .g-7 { background: #a0a0a0; }
.g-8 { background: #909090; } .g-9 { background: #808080; } .g-10 { background: #707070; } .g-11 { background: #606060; }
.g-12 { background: #505050; } .g-13 { background: #404040; } .g-14 { background: #2c2c2c; } .g-15 { background: #000; }

.rss { height: 25px; padding: 0 20px 0 2px; }
.feed { flex: 1; min-width: 0; display: flex; gap: 5px; margin-right: 20px; overflow: hidden; font: 15px/24px "Liberation Sans", sans-serif; white-space: nowrap; }
.item { flex: none; min-width: 524px; border-right: 1px solid var(--line); }
.item a { color: #1e1ee6; text-decoration: none; }
.item time { color: #1a1a90; }

.status { height: 25px; padding: 0 20px 0 8px; font: 14px/18px var(--small-ui); white-space: nowrap; display: grid; grid-template-columns: 294px 68px 29px 71px 29px 95px 85px auto 1fr; }
.status svg { width: 18px; height: 14px; }
.status .side-action { justify-self: end; }
.formula small { font-size: 11px; vertical-align: -2px; }

.tabs { height: 40px; flex: none; display: flex; align-items: center; padding: 0 14px 0 3px; border-bottom: 1px solid var(--line); background: linear-gradient(#cbdcf6, #dbe9fa); font: 17px "Liberation Sans", sans-serif; color: var(--ink); }
.tabs button { height: 33px; padding: 0 7px; }
.tabs .active { padding: 0 5px 0 4px; background: #f8f1dd; border: 1px solid #8fa4ba; }
.tabs .tabs-more { margin-left: auto; padding: 0; }
```
